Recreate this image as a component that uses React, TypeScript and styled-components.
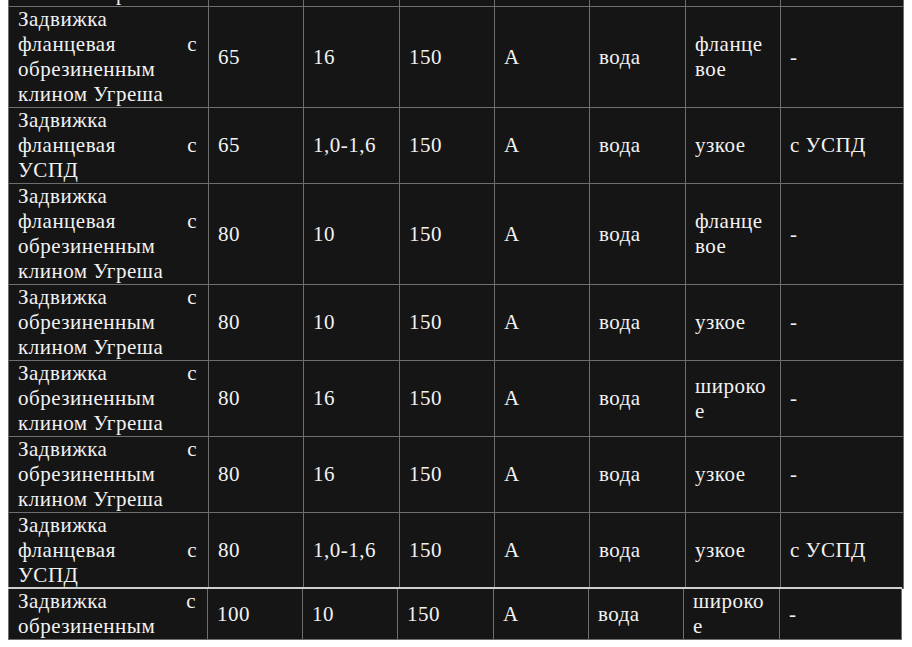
import React from "react";
import styled, { createGlobalStyle } from "styled-components";

const GlobalStyle = createGlobalStyle`
  html, body { margin: 0; padding: 0; background: #ffffff; }
  body { font-family: "Liberation Serif", "Times New Roman", serif; overflow: hidden; }
`;

const Page = styled.div`
  padding: 0 0 0 8px;
  display: flex;
  flex-direction: column;
`;

const Table = styled.table<{ $first?: boolean }>`
  border-collapse: collapse;
  table-layout: fixed;
  width: ${(p) => (p.$first ? "895px" : "893px")};
  margin-top: ${(p) => (p.$first ? "-95px" : "-2px")};
  background: #151515;
  color: #f2f2f2;
  font-family: "Liberation Serif", "Times New Roman", serif;
  font-size: 21px;
  letter-spacing: 0.5px;
  line-height: 25px;
  border: 1px solid #7c7c7c;
  ${(p) =>
    p.$first
      ? ""
      : `border-top: 2px solid #d0d0d0; border-bottom: 1px solid #a8a8a8; border-right: 1px solid #9a9a9a;`}
`;

const Cell = styled.td<{ $name?: boolean }>`
  border: 1px solid #6e6e6e;
  padding: 0 11px 0 9px;
  vertical-align: middle;
  text-align: ${(p) => (p.$name ? "justify" : "left")};
  overflow-wrap: anywhere;
  white-space: normal;
`;

const Row = styled.tr``;

type RowData = [string, string, string, string, string, string, string, string];

const firstRows: RowData[] = [
  ["Задвижка фланцевая с обрезиненным клином Угреша", "65", "10", "150", "А", "вода", "узкое", "-"],
  ["Задвижка фланцевая с обрезиненным клином Угреша", "65", "16", "150", "А", "вода", "фланцевое", "-"],
  ["Задвижка фланцевая с УСПД", "65", "1,0-1,6", "150", "А", "вода", "узкое", "с УСПД"],
  ["Задвижка фланцевая с обрезиненным клином Угреша", "80", "10", "150", "А", "вода", "фланцевое", "-"],
  ["Задвижка с обрезиненным клином Угреша", "80", "10", "150", "А", "вода", "узкое", "-"],
  ["Задвижка с обрезиненным клином Угреша", "80", "16", "150", "А", "вода", "широкое", "-"],
  ["Задвижка с обрезиненным клином Угреша", "80", "16", "150", "А", "вода", "узкое", "-"],
  ["Задвижка фланцевая с УСПД", "80", "1,0-1,6", "150", "А", "вода", "узкое", "с УСПД"],
];

const secondRows: RowData[] = [
  ["Задвижка с обрезиненным", "100", "10", "150", "А", "вода", "широкое", "-"],
];

const firstCols = [200, 95, 96, 95, 95, 96, 95, 123];
const secondCols = [199, 95, 95, 96, 95, 95, 96, 122];

function DataTable({ rows, cols, first }: { rows: RowData[]; cols: number[]; first?: boolean }) {
  return (
    <Table $first={first}>
      <colgroup>
        {cols.map((w, i) => (
          <col key={i} style={{ width: w }} />
        ))}
      </colgroup>
      <tbody>
        {rows.map((r, i) => (
          <Row key={i}>
            {r.map((c, j) => (
              <Cell key={j} $name={j === 0}>
                {c}
              </Cell>
            ))}
          </Row>
        ))}
      </tbody>
    </Table>
  );
}

export default function App() {
  return (
    <>
      <GlobalStyle />
      <Page>
        <DataTable rows={firstRows} cols={firstCols} first />
        <DataTable rows={secondRows} cols={secondCols} />
      </Page>
    </>
  );
}
